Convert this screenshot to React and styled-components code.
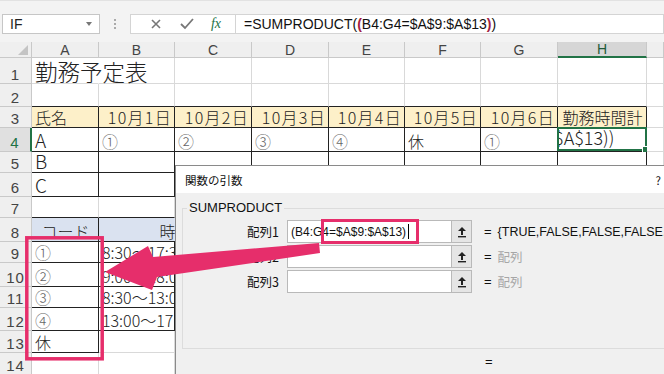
import React from 'react'
import styled, { createGlobalStyle, css } from 'styled-components'

const GlobalStyle = createGlobalStyle`
  html, body { margin: 0; padding: 0; background: #fff; }
  body { width: 664px; height: 374px; overflow: hidden; font-family: "Liberation Sans", "Noto Sans CJK JP", sans-serif; }
`

const colores = {
  grid: '#d9d9d9',
  head: '#efefef',
  headLine: '#c9c9c9',
  green: '#217346',
  pink: '#e62e6b',
  yellow: '#fdf0c9',
  blue: '#dae2f0'
}

const COL_W = [32, 67, 76, 77, 77, 76, 76, 77, 89]
const ROW_H = [16, 26, 23, 21, 24, 21, 24, 21, 24, 21, 24, 21, 23, 22, 22]
const LETTERS = ['A', 'B', 'C', 'D', 'E', 'F', 'G', 'H', 'I']

const CELLS = {
  A1: { text: '勤務予定表', size: 22.5, over: true },
  A3: { text: '氏名', bg: colores.yellow },
  B3: { text: '10月1日', bg: colores.yellow, align: 'right', wide: true },
  C3: { text: '10月2日', bg: colores.yellow, align: 'right', wide: true },
  D3: { text: '10月3日', bg: colores.yellow, align: 'right', wide: true },
  E3: { text: '10月4日', bg: colores.yellow, align: 'right', wide: true },
  F3: { text: '10月5日', bg: colores.yellow, align: 'right', wide: true },
  G3: { text: '10月6日', bg: colores.yellow, align: 'right', wide: true },
  H3: { text: '勤務時間計', bg: colores.yellow, align: 'center' },
  A4: { text: 'A', size: 19 },
  B4: { text: '①', soft: true },
  C4: { text: '②', soft: true },
  D4: { text: '③', soft: true },
  E4: { text: '④', soft: true },
  F4: { text: '休' },
  G4: { text: '①', soft: true },
  A5: { text: 'B', size: 19 },
  A6: { text: 'C', size: 19 },
  A8: { text: 'コード', bg: colores.blue, align: 'center' },
  B8: { text: '時間', bg: colores.blue, align: 'center', span: 2 },
  A9: { text: '①', soft: true },
  B9: { text: '8:30～17:30', clip: true },
  A10: { text: '②', soft: true },
  B10: { text: '9:00～18:00', clip: true },
  A11: { text: '③', soft: true },
  B11: { text: '8:30～13:00', clip: true },
  A12: { text: '④', soft: true },
  B12: { text: '13:00～17:00', clip: true },
  A13: { text: '休' }
}

const TABLES = [
  { r1: 3, r2: 6, c1: 1, c2: 8 },
  { r1: 8, r2: 12, c1: 1, c2: 3 },
  { r1: 13, r2: 13, c1: 1, c2: 1 }
]

const inTable = (r, c) => TABLES.some(t => r >= t.r1 && r <= t.r2 && c >= t.c1 && c <= t.c2)

const UpButton = () => (
  <ArgButton>
    <svg width="10" height="12" viewBox="0 0 10 12">
      <path d="M5 1 L9 5 L6 5 L6 9 L4 9 L4 5 L1 5 Z" fill="#222" />
      <rect x="1" y="10" width="8" height="1.4" fill="#222" />
    </svg>
  </ArgButton>
)

const ArgRow = ({ label, value, hint, children }) => (
  <ArgLine>
    <ArgLabel>{label}</ArgLabel>
    <ArgInput>{children}</ArgInput>
    <UpButton />
    <Equals>=</Equals>
    <ArgValue $hint={hint}>{value}</ArgValue>
  </ArgLine>
)

const App = () => {
  const rows = []
  for (let r = 1; r <= 14; r++) {
    rows.push(<RowHead key={'h' + r} $sel={r === 4}>{r}</RowHead>)
    for (let c = 1; c <= 9; c++) {
      const key = LETTERS[c - 1] + r
      if (key === 'C8') continue
      const cell = CELLS[key] || {}
      const span = cell.span || 1
      const lastC = c + span - 1
      const blackR = inTable(r, lastC) || inTable(r, lastC + 1)
      const blackB = inTable(r, c) || inTable(r + 1, c)
      if (key === 'H4') {
        rows.push(
          <Cell key={key} $blackR $blackB>
            <ActiveCell>
              <EditText>$A$13))</EditText>
              <FillHandle />
            </ActiveCell>
          </Cell>
        )
        continue
      }
      rows.push(
        <Cell
          key={key}
          $span={span}
          $bg={cell.bg}
          $align={cell.align}
          $size={cell.size}
          $over={cell.over}
          $clip={cell.clip}
          $wide={cell.wide}
          $soft={cell.soft}
          $blackR={blackR}
          $blackB={blackB}
        >
          {cell.text}
        </Cell>
      )
    }
  }

  return (
    <Page>
      <GlobalStyle />
      <FormulaBar>
        <NameBox>
          IF
          <DropArrow />
        </NameBox>
        <Grip>
          <i /><i /><i />
        </Grip>
        <FxGroup>
          <svg width="14" height="14" viewBox="0 0 14 14">
            <path d="M3 3 L11 11 M11 3 L3 11" stroke="#777" strokeWidth="1.6" />
          </svg>
          <svg width="16" height="14" viewBox="0 0 16 14">
            <path d="M2 7 L6 11 L14 2" stroke="#777" strokeWidth="1.8" fill="none" />
          </svg>
          <FxText>fx</FxText>
        </FxGroup>
        <FormulaInput>
          =SUMPRODUCT(<Paren>(</Paren>B4:G4=$A$9:$A$13<Paren>)</Paren>)
        </FormulaInput>
      </FormulaBar>

      <Sheet>
        <Corner>
          <svg width="10" height="10" viewBox="0 0 10 10">
            <path d="M10 0 L10 10 L0 10 Z" fill="#c4c4c4" />
          </svg>
        </Corner>
        {LETTERS.map(l => (
          <ColHead key={l} $sel={l === 'H'}>{l === 'I' ? '' : l}</ColHead>
        ))}
        {rows}
      </Sheet>

      <Dialog>
        <TitleBar>
          <span>関数の引数</span>
          <span>?</span>
        </TitleBar>
        <DialogBody>
          <GroupBox>
            <Legend>SUMPRODUCT</Legend>
            <ArgRow label="配列1" value="{TRUE,FALSE,FALSE,FALSE,FALSE}">
              (B4:G4=$A$9:$A$13)<Caret />
            </ArgRow>
            <ArgRow label="配列2" value="配列" hint />
            <ArgRow label="配列3" value="配列" hint />
          </GroupBox>
          <ResultLine>=</ResultLine>
        </DialogBody>
      </Dialog>

      <Marks width="664" height="374" viewBox="0 0 664 374">
        <rect x="26.8" y="237.8" width="75.4" height="121" fill="none" stroke={colores.pink} strokeWidth="3.5" />
        <rect x="322.5" y="220.5" width="95" height="22" fill="none" stroke={colores.pink} strokeWidth="3" />
        <polygon
          points="105,272 148,246 153,257 319,243 320,253 157,277 152,290"
          fill={colores.pink}
        />
      </Marks>
    </Page>
  )
}

export default App

//================================STYLES===============================
const Page = styled.div`
  position: relative;
  width: 664px;
  height: 374px;
  overflow: hidden;
  background: #fff;
`

const FormulaBar = styled.div`
  display: flex;
  align-items: flex-start;
  height: 42px;
  box-sizing: border-box;
  padding: 13px 0 0 2px;
  background: #f3f3f3;
  border-top: 1px solid #e2e2e2;
`

const NameBox = styled.div`
  position: relative;
  flex-shrink: 0;
  width: 98px;
  height: 20px;
  box-sizing: border-box;
  border: 1px solid #c6c6c6;
  background: #fff;
  font-size: 14px;
  line-height: 18px;
  padding-left: 7px;
  color: #222;
`

const DropArrow = styled.span`
  position: absolute;
  right: 7px;
  top: 7px;
  border-left: 3px solid transparent;
  border-right: 3px solid transparent;
  border-top: 4px solid #777;
`

const Grip = styled.div`
  flex-shrink: 0;
  width: 30px;
  height: 20px;
  display: flex;
  flex-direction: column;
  align-items: center;
  justify-content: center;
  gap: 2px;
  i {
    width: 2px;
    height: 2px;
    background: #aaa;
  }
`

const FxGroup = styled.div`
  flex-shrink: 0;
  width: 105px;
  height: 20px;
  box-sizing: border-box;
  border: 1px solid #d4d4d4;
  border-right: none;
  background: #fff;
  display: flex;
  align-items: center;
  justify-content: space-around;
  padding: 0 6px 0 10px;
`

const FxText = styled.span`
  font-family: "Liberation Serif", serif;
  font-style: italic;
  font-size: 14px;
  color: ${colores.green};
`

const FormulaInput = styled.div`
  flex: 1;
  height: 20px;
  box-sizing: border-box;
  border: 1px solid #d4d4d4;
  background: #fff;
  font-size: 14px;
  line-height: 18px;
  padding-left: 8px;
  color: #111;
  white-space: nowrap;
  overflow: hidden;
`

const Paren = styled.span`
  color: #a3213f;
  font-weight: bold;
`

const Sheet = styled.div`
  display: grid;
  grid-template-columns: ${COL_W.map(w => w + 'px').join(' ')} 1fr;
  grid-template-rows: ${ROW_H.map(h => h + 'px').join(' ')};
  font-family: "Noto Sans CJK JP", "Liberation Sans", sans-serif;
`

const Corner = styled.div`
  background: ${colores.head};
  border-right: 1px solid ${colores.headLine};
  border-bottom: 1px solid ${colores.headLine};
  display: flex;
  align-items: flex-end;
  justify-content: flex-end;
  padding: 0 3px 2px 0;
  svg { display: block; }
`

const ColHead = styled.div`
  background: ${colores.head};
  border-right: 1px solid ${colores.headLine};
  border-bottom: 1px solid ${colores.headLine};
  display: flex;
  align-items: center;
  justify-content: center;
  font-family: "Liberation Sans", sans-serif;
  font-size: 14px;
  color: #444;
  ${props => props.$sel && css`
    background: #d6d6d6;
    border-bottom: 2px solid ${colores.green};
    color: #1f5b3a;
  `}
`

const RowHead = styled.div`
  background: ${colores.head};
  border-right: 1px solid ${colores.headLine};
  border-bottom: 1px solid ${colores.headLine};
  display: flex;
  align-items: flex-end;
  justify-content: center;
  padding-bottom: 1px;
  font-family: "Liberation Sans", sans-serif;
  font-size: 15px;
  letter-spacing: 1px;
  line-height: 1;
  color: #444;
  ${props => props.$sel && css`
    background: #e0e0e0;
    border-right: 2px solid ${colores.green};
    color: ${colores.green};
  `}
`

const Cell = styled.div`
  grid-column: span ${props => props.$span || 1};
  box-sizing: border-box;
  min-width: 0;
  background: ${props => props.$bg || '#fff'};
  border-right: 1px solid ${props => (props.$blackR ? '#222' : colores.grid)};
  border-bottom: 1px solid ${props => (props.$blackB ? '#222' : colores.grid)};
  display: flex;
  align-items: flex-end;
  justify-content: ${props =>
    props.$align === 'right' ? 'flex-end' : props.$align === 'center' ? 'center' : 'flex-start'};
  padding: 0 2px 2px 3px;
  font-size: ${props => props.$size || 16}px;
  font-weight: 300;
  line-height: 1;
  color: ${props => (props.$soft ? '#666' : '#222')};
  white-space: nowrap;
  overflow: visible;
  position: relative;
  ${props => props.$wide && css`
    letter-spacing: 1.3px;
  `}
  ${props => props.$clip && css`
    overflow: hidden;
  `}
  ${props => props.$over && css`
    z-index: 1;
    border-right-color: transparent;
    padding-bottom: 1px;
  `}
`

const ActiveCell = styled.div`
  position: absolute;
  inset: -1px -1px 0 -1px;
  border: 2px solid ${colores.green};
  display: flex;
  align-items: flex-end;
`

const EditText = styled.div`
  width: 100%;
  overflow: hidden;
  font-size: 18px;
  font-weight: 300;
  line-height: 1.1;
  padding-bottom: 1px;
  text-indent: -5px;
  white-space: nowrap;
`

const FillHandle = styled.span`
  position: absolute;
  right: -4px;
  bottom: -4px;
  width: 5px;
  height: 5px;
  background: ${colores.green};
  border: 1px solid #fff;
`

const Dialog = styled.div`
  position: absolute;
  left: 175px;
  top: 165px;
  right: 0;
  bottom: 0;
  overflow: hidden;
  border-left: 1px solid #8a8a8a;
  border-top: 1px solid #8a8a8a;
  background: #f0f0f0;
  display: flex;
  flex-direction: column;
  font-family: "Liberation Sans", "Noto Sans CJK JP", sans-serif;
  color: #111;
`

const TitleBar = styled.div`
  height: 27px;
  flex-shrink: 0;
  background: #fff;
  display: flex;
  align-items: center;
  justify-content: space-between;
  padding: 0 3px 0 9px;
  font-family: "Noto Sans CJK JP", sans-serif;
  font-size: 11.5px;
`

const DialogBody = styled.div`
  flex: 1;
  padding: 15px 0 0 6px;
  display: flex;
  flex-direction: column;
`

const GroupBox = styled.div`
  position: relative;
  flex-shrink: 0;
  height: 141px;
  box-sizing: border-box;
  border: 1px solid #dcdcdc;
  border-right: none;
  padding-top: 11px;
  display: flex;
  flex-direction: column;
  gap: 2px;
`

const Legend = styled.span`
  position: absolute;
  left: 4px;
  top: -9px;
  padding: 0 2px;
  background: #f0f0f0;
  font-size: 13px;
  line-height: 16px;
`

const ArgLine = styled.div`
  display: flex;
  align-items: center;
  height: 23px;
  white-space: nowrap;
`

const ArgLabel = styled.div`
  flex-shrink: 0;
  width: 96px;
  text-align: right;
  font-family: "Noto Sans CJK JP", sans-serif;
  font-size: 12.5px;
  margin-right: 8px;
`

const ArgInput = styled.div`
  flex-shrink: 0;
  width: 165px;
  height: 23px;
  box-sizing: border-box;
  border: 1px solid #b9b9b9;
  background: #fff;
  display: flex;
  align-items: center;
  padding-left: 3px;
  font-size: 12px;
  white-space: nowrap;
`

const Caret = styled.span`
  width: 1px;
  height: 15px;
  margin-left: 2px;
  background: #000;
`

const ArgButton = styled.div`
  flex-shrink: 0;
  width: 20px;
  height: 23px;
  box-sizing: border-box;
  border: 1px solid #b9b9b9;
  border-left: none;
  background: #e5e5e5;
  display: flex;
  align-items: center;
  justify-content: center;
`

const Equals = styled.span`
  flex-shrink: 0;
  margin: 0 6px 0 12px;
  font-size: 13px;
`

const ArgValue = styled.span`
  flex-shrink: 0;
  font-size: 12.5px;
  white-space: nowrap;
  ${props => props.$hint && css`
    color: #a6a6a6;
    font-family: "Noto Sans CJK JP", sans-serif;
  `}
`

const ResultLine = styled.div`
  padding: 5px 0 0 303px;
  font-size: 13px;
`

const Marks = styled.svg`
  position: absolute;
  left: 0;
  top: 0;
  pointer-events: none;
`
